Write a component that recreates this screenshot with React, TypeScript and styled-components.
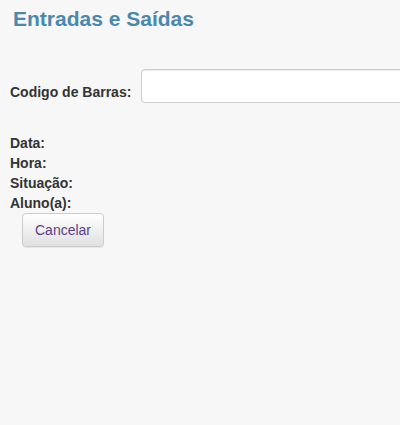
import { createGlobalStyle, styled } from "styled-components";

const GlobalStyle = createGlobalStyle`
  html, body {
    margin: 0;
    padding: 0;
    background: #f7f7f7;
    font-family: "Liberation Sans", Arial, Helvetica, sans-serif;
    color: #333;
    overflow: hidden;
  }
`;

function App() {
  return (
    <>
      <GlobalStyle />
      <Page>
        <Title>Entradas e Saídas</Title>

        <BarcodeRow>
          <Label htmlFor="codigo">Codigo de Barras:</Label>
          <BarcodeInput id="codigo" type="text" />
        </BarcodeRow>

        <InfoList>
          <InfoItem>Data:</InfoItem>
          <InfoItem>Hora:</InfoItem>
          <InfoItem>Situação:</InfoItem>
          <InfoItem>Aluno(a):</InfoItem>
        </InfoList>

        <CancelButton type="button">Cancelar</CancelButton>
      </Page>
    </>
  );
}

const Page = styled.div`
  display: flex;
  flex-direction: column;
  align-items: flex-start;
  height: 425px;
  padding: 7px 0 0 10px;
  box-sizing: border-box;
`;

const Title = styled.h2`
  margin: 0 0 0 3px;
  font-size: 21px;
  line-height: 24px;
  font-weight: bold;
  color: #4a88ac;
`;

const BarcodeRow = styled.div`
  display: flex;
  align-items: center;
  gap: 10px;
  margin-top: 37px;
  align-self: stretch;
  overflow: hidden;
  padding: 1px 0;
`;

const Label = styled.label`
  font-size: 14px;
  font-weight: bold;
  white-space: nowrap;
  padding-top: 12px;
`;

const BarcodeInput = styled.input`
  flex: 0 0 auto;
  width: 300px;
  height: 34px;
  box-sizing: border-box;
  border: 1px solid #ccc;
  border-radius: 4px;
  background: #fff;
  box-shadow: inset 0 1px 1px rgba(0, 0, 0, 0.075);
  padding: 6px 12px;
  font-size: 14px;
  outline: none;
`;

const InfoList = styled.div`
  display: flex;
  flex-direction: column;
  margin-top: 29px;
`;

const InfoItem = styled.div`
  font-size: 14px;
  font-weight: bold;
  line-height: 20px;
`;

const CancelButton = styled.button`
  margin: 0 0 0 12px;
  height: 34px;
  padding: 0 12px;
  font-family: "Liberation Sans", Arial, sans-serif;
  font-size: 14px;
  color: #5b3f8c;
  border: 1px solid #ccc;
  border-radius: 4px;
  background: linear-gradient(to bottom, #ffffff 0%, #e0e0e0 100%);
  box-shadow: inset 0 1px 0 rgba(255, 255, 255, 0.15), 0 1px 1px rgba(0, 0, 0, 0.075);
  cursor: pointer;
`;

export default App;
